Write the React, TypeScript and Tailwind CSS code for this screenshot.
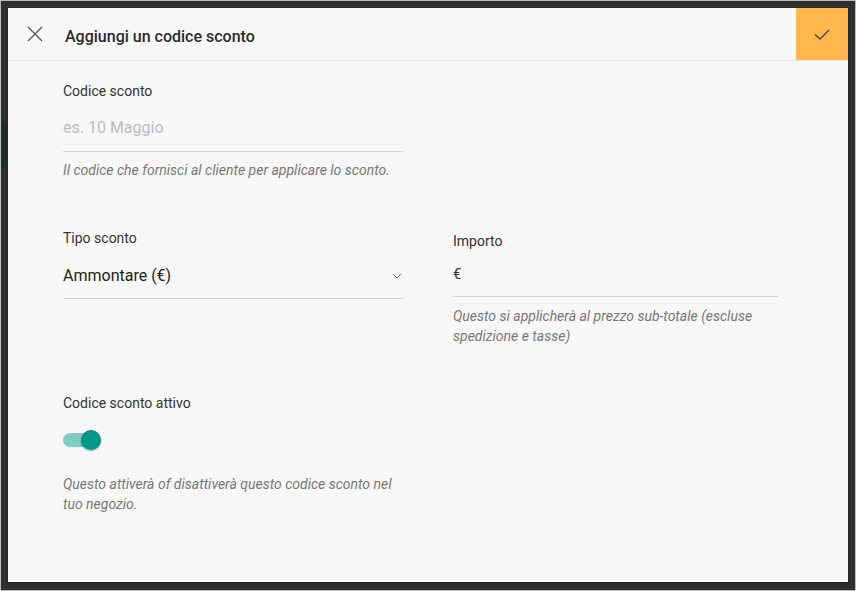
import { useState } from 'react';

export default function App() {
  const [active, setActive] = useState(true);

  return (
    <div
      className="relative w-[856px] h-[591px] bg-[#2e2e2e] border border-[#bdbdbd] p-[7px] pb-[8px]"
      style={{ fontFamily: 'Roboto, "Liberation Sans", sans-serif' }}
    >
      {/* bordo verde della pagina dietro */}
      <div className="absolute left-0 top-[122px] w-[7px] h-[44px] bg-[#1f2e29]" />

      <div className="flex flex-col h-full bg-[#f8f8f8] shadow-[0_1px_2px_rgba(0,0,0,0.4)]">
        {/* Intestazione */}
        <div className="flex items-center h-[53px] border-b border-[#e8e8e8] shrink-0">
          <button type="button" className="w-[52px] h-[52px] flex items-center justify-center text-[#555] pl-[1px]">
            <svg width="18" height="18" viewBox="0 0 18 18" fill="none" stroke="currentColor" strokeWidth={1.3}>
              <path d="M2 2l14 14M16 2L2 16" />
            </svg>
          </button>
          <h1 className="ml-[5px] pt-[6px] text-[16px] font-medium text-[#2b2b2b] flex-1">Aggiungi un codice sconto</h1>
          <button type="button" className="w-[52px] h-[52px] bg-[#ffb74d] flex items-center justify-center text-[#444]">
            <svg width="18" height="18" viewBox="0 0 18 18" fill="none" stroke="currentColor" strokeWidth={1.3}>
              <path d="M2 9.5l5 4.5 9-9" />
            </svg>
          </button>
        </div>

        {/* Contenuto */}
        <div className="pl-[55px] pt-[20px]">
          <div className="w-[340px]">
            <label className="block text-[14px] text-[#333] leading-[20px]">Codice sconto</label>
            <div className="mt-[17px] pb-[13px] border-b border-[#d6d6d6] text-[16px] text-[#bcbcbc] leading-[20px]">
              es. 10 Maggio
            </div>
            <p className="mt-[9px] text-[14px] italic text-[#777] leading-[19px]">
              Il codice che fornisci al cliente per applicare lo sconto.
            </p>
          </div>

          <div className="flex mt-[48px]">
            <div className="w-[340px]">
              <label className="block text-[14px] text-[#333] leading-[20px]">Tipo sconto</label>
              <div className="mt-[17px] pb-[11px] border-b border-[#d6d6d6] flex items-center justify-between">
                <span className="text-[16px] text-[#222] leading-[22px]">Ammontare (€)</span>
                <svg width="10" height="6" viewBox="0 0 10 6" fill="none" stroke="#777" strokeWidth={1} className="mr-[1px]">
                  <path d="M1 1l4 4 4-4" />
                </svg>
              </div>
            </div>

            <div className="w-[325px] ml-[50px] pt-[3px]">
              <label className="block text-[14px] text-[#333] leading-[20px]">Importo</label>
              <div className="mt-[13px] pb-[12px] border-b border-[#d6d6d6] text-[15px] text-[#333] leading-[20px]">€</div>
              <p className="mt-[10px] text-[14px] italic text-[#777] leading-[19.5px]">
                Questo si applicherà al prezzo sub-totale (escluse spedizione e tasse)
              </p>
            </div>
          </div>

          <div className="w-[340px] mt-[47px]">
            <label className="block text-[14px] text-[#333] leading-[20px]">Codice sconto attivo</label>
            <button
              type="button"
              onClick={() => setActive(!active)}
              className="relative mt-[17px] w-[40px] h-[20px] flex items-center"
              aria-label="Codice sconto attivo"
            >
              <span className={`w-[34px] h-[14px] rounded-full ${active ? 'bg-[#80cbc4]' : 'bg-[#bdbdbd]'}`} />
              <span
                className={`absolute top-0 w-[20px] h-[20px] rounded-full shadow-[0_1px_2px_rgba(0,0,0,0.35)] ${
                  active ? 'left-[18px] bg-[#009688]' : 'left-0 bg-[#f1f1f1]'
                }`}
              />
            </button>
            <p className="mt-[25px] text-[14px] italic text-[#777] leading-[19.5px]">
              Questo attiverà of disattiverà questo codice sconto nel tuo negozio.
            </p>
          </div>
        </div>
      </div>
    </div>
  );
}
